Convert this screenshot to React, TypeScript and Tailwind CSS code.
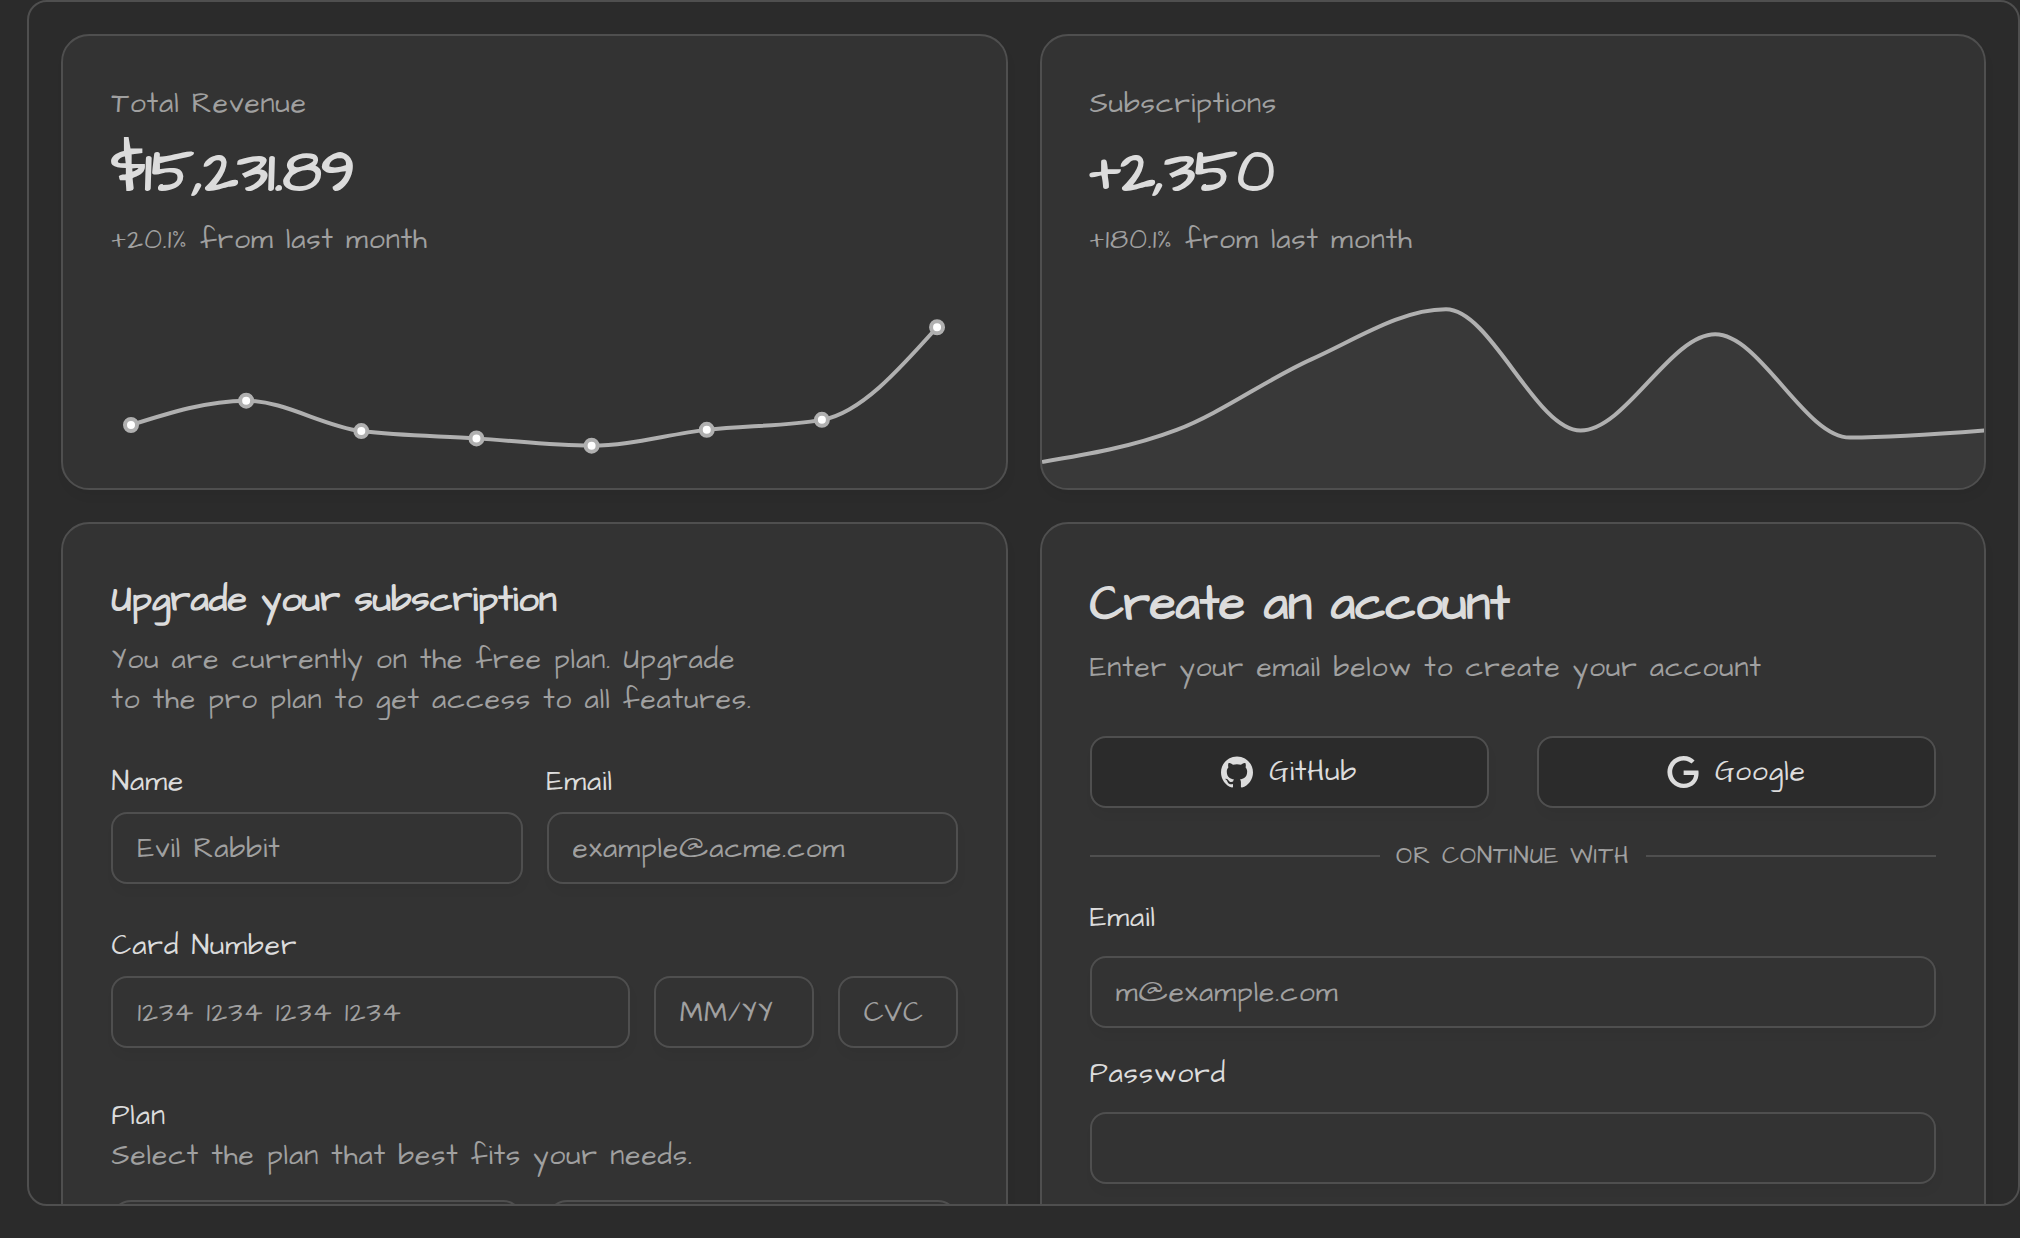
import type { ReactNode } from "react";
import { SiGithub, SiGoogle } from "react-icons/si";

type Point = [number, number];

/* Monotone cubic interpolation through the points, as an SVG path. */
function monotonePath(pts: Point[]): string {
  const n = pts.length;
  const h: number[] = [];
  const s: number[] = [];
  for (let i = 0; i < n - 1; i++) {
    h.push(pts[i + 1][0] - pts[i][0]);
    s.push((pts[i + 1][1] - pts[i][1]) / h[i]);
  }
  const m: number[] = new Array(n).fill(0);
  for (let i = 1; i < n - 1; i++) {
    const p = (s[i - 1] * h[i] + s[i] * h[i - 1]) / (h[i - 1] + h[i]);
    m[i] =
      (Math.sign(s[i - 1]) + Math.sign(s[i])) *
      Math.min(Math.abs(s[i - 1]), Math.abs(s[i]), 0.5 * Math.abs(p));
  }
  m[0] = (3 * s[0] - m[1]) / 2;
  m[n - 1] = (3 * s[n - 2] - m[n - 2]) / 2;
  let d = `M${pts[0][0]},${pts[0][1]}`;
  for (let i = 0; i < n - 1; i++) {
    const [x0, y0] = pts[i];
    const [x1, y1] = pts[i + 1];
    const dx = (x1 - x0) / 3;
    d += `C${x0 + dx},${y0 + dx * m[i]},${x1 - dx},${y1 - dx * m[i + 1]},${x1},${y1}`;
  }
  return d;
}

const revenue = [10400, 14405, 9400, 8200, 7000, 9600, 11244, 26475];
const subscriptions = [40, 90, 200, 278, 89, 239, 78, 89];

function RevenueChart() {
  const pts: Point[] = revenue.map((v, i) => [68 + i * 115.15, 165 - (v - 10400) * 0.00608]);
  return (
    <svg className="block h-[228px] w-full" fill="none">
      <path d={monotonePath(pts)} stroke="#b0b0b0" strokeWidth="4" />
      {pts.map(([x, y]) => (
        <circle key={x} cx={x} cy={y} r="6" fill="#ffffff" stroke="#b0b0b0" strokeWidth="4" />
      ))}
    </svg>
  );
}

function SubscriptionsChart() {
  const pts: Point[] = subscriptions.map((v, i) => [i * 134.65, 202 - (v - 40) * 0.6415]);
  const line = monotonePath(pts);
  return (
    <svg className="block h-[228px] w-full" fill="none">
      <path d={`${line}L942.55,228L0,228Z`} fill="#b0b0b0" fillOpacity="0.05" />
      <path d={line} stroke="#b0b0b0" strokeWidth="4" />
    </svg>
  );
}

function Card({ children }: { children: ReactNode }) {
  return (
    <section className="overflow-hidden rounded-[28px] border-2 border-[#4f4f4f] bg-[#333333] shadow-[2px_8px_10px_rgba(0,0,0,0.03)]">
      {children}
    </section>
  );
}

function Stat({ label, value, change, children }: { label: string; value: string; change: string; children: ReactNode }) {
  return (
    <Card>
      <div className="flex flex-col gap-3 px-12 pt-12">
        <p className="leading-10 text-[#a0a0a0]">{label}</p>
        <p className="-mb-px pt-px text-[60px] leading-[72px] font-bold tracking-[-0.5px]">{value}</p>
        <p className="leading-10 text-[#a0a0a0]">{change}</p>
      </div>
      {children}
    </Card>
  );
}

function Input({ placeholder }: { placeholder?: string }) {
  return (
    <input
      placeholder={placeholder}
      className="h-[72px] w-full min-w-0 rounded-2xl border-2 border-[#4f4f4f] bg-transparent px-6 tracking-[1px] shadow-[2px_8px_10px_rgba(0,0,0,0.03)] outline-none placeholder:text-[#a0a0a0]"
    />
  );
}

function Label({ children }: { children: ReactNode }) {
  return <label className="block leading-7 font-medium">{children}</label>;
}

function SocialButton({ icon, children }: { icon: ReactNode; children: ReactNode }) {
  return (
    <button className="flex h-[72px] items-center justify-center gap-4 rounded-2xl border-2 border-[#4f4f4f] bg-[#2b2b2b] leading-10 font-medium tracking-[1px] shadow-[2px_8px_10px_rgba(0,0,0,0.03)]">
      {icon}
      {children}
    </button>
  );
}

function PlanOption() {
  return <div className="h-[132px] rounded-[20px] border-2 border-[#4f4f4f]" />;
}

export default function App() {
  return (
    <div className="h-[1238px] overflow-hidden bg-[#2b2b2b] pl-[27.45px] font-['Architects_Daughter',cursive] text-[28px] tracking-[1px] text-[#dcdcdc]">
      <main className="h-[1206px] overflow-hidden rounded-[20px] border-2 border-[#4f4f4f] p-8">
        <div className="grid grid-cols-2 gap-8">
          <Stat label="Total Revenue" value="$15,231.89" change="+20.1% from last month">
            <RevenueChart />
          </Stat>
          <Stat label="Subscriptions" value="+2,350" change="+180.1% from last month">
            <SubscriptionsChart />
          </Stat>

          <Card>
            <div className="flex flex-col gap-12 p-12">
              <header className="flex flex-col gap-3">
                <h2 className="text-[36px] leading-[56px] font-bold tracking-[0.1px]">Upgrade your subscription</h2>
                <p className="leading-10 text-[#a0a0a0]">
                  You are currently on the free plan. Upgrade
                  <br />
                  to the pro plan to get access to all features.
                </p>
              </header>
              <div className="grid grid-cols-2 gap-6">
                <div className="flex flex-col gap-4">
                  <Label>Name</Label>
                  <Input placeholder="Evil Rabbit" />
                </div>
                <div className="flex flex-col gap-4">
                  <Label>Email</Label>
                  <Input placeholder="example@acme.com" />
                </div>
              </div>
              <div className="flex flex-col gap-4">
                <Label>Card Number</Label>
                <div className="grid grid-cols-[1fr_160px_120px] gap-6">
                  <Input placeholder="1234 1234 1234 1234" />
                  <Input placeholder="MM/YY" />
                  <Input placeholder="CVC" />
                </div>
              </div>
              <div className="flex flex-col gap-6">
                <div>
                  <p className="leading-10 font-medium">Plan</p>
                  <p className="leading-10 text-[#a0a0a0]">Select the plan that best fits your needs.</p>
                </div>
                <div className="grid grid-cols-2 gap-6">
                  <PlanOption />
                  <PlanOption />
                </div>
              </div>
            </div>
          </Card>

          <Card>
            <div className="flex flex-col gap-8 p-12">
              <header className="mb-4 flex flex-col gap-3">
                <h2 className="-mb-px pt-px text-[48px] leading-[64px] font-bold tracking-[-0.2px]">Create an account</h2>
                <p className="leading-10 text-[#a0a0a0]">Enter your email below to create your account</p>
              </header>
              <div className="grid grid-cols-2 gap-12">
                <SocialButton icon={<SiGithub className="size-8" />}>GitHub</SocialButton>
                <SocialButton icon={<SiGoogle className="size-8" />}>Google</SocialButton>
              </div>
              <div className="flex items-center">
                <span className="h-0.5 flex-1 bg-[#4f4f4f]" />
                <span className="px-4 text-2xl leading-8 tracking-[1px] text-[#a0a0a0] uppercase">Or continue with</span>
                <span className="h-0.5 flex-1 bg-[#4f4f4f]" />
              </div>
              <div className="flex flex-col gap-6">
                <Label>Email</Label>
                <Input placeholder="m@example.com" />
              </div>
              <div className="flex flex-col gap-6">
                <Label>Password</Label>
                <Input />
              </div>
            </div>
          </Card>
        </div>
      </main>
    </div>
  );
}
